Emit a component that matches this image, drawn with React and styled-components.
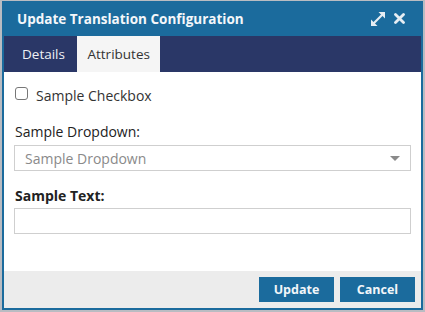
import React from "react";
import styled, { createGlobalStyle } from "styled-components";

const Global = createGlobalStyle`
  html, body { margin: 0; padding: 0; }
  body {
    background: #b9bcc2;
    font-family: "Open Sans", "Liberation Sans", sans-serif;
    width: 425px;
    height: 312px;
    overflow: hidden;
  }
  #root { padding: 1px 2px 0 2px; }
`;

const BLUE = "#1b6b9d";

const Dialog = styled.div`
  width: 421px;
  box-sizing: border-box;
  border: 2px solid ${BLUE};
  border-top: none;
  background: #fff;
  display: flex;
  flex-direction: column;
`;

const TitleBar = styled.div`
  height: 35px;
  background: ${BLUE};
  display: flex;
  align-items: center;
  padding: 0 18px 0 15px;
  margin: 0 -2px;
  box-sizing: border-box;
`;

const Title = styled.div`
  flex: 1;
  color: #f4f7fa;
  font-size: 13.5px;
  font-weight: 700;
`;

const IconBtn = styled.span`
  display: inline-flex;
  width: ${(p) => p.$w}px;
  height: 16px;
  align-items: center;
  justify-content: center;
  margin-left: ${(p) => p.$ml || 0}px;
`;

const TabBar = styled.div`
  height: 36px;
  background: #2a3767;
  display: flex;
`;

const Tab = styled.div`
  display: flex;
  align-items: center;
  padding-left: ${(p) => (p.$active ? "10px" : "18px")};
  padding-right: ${(p) => (p.$active ? "10.5px" : "12.5px")};
  background: ${(p) => (p.$active ? "#f5f5f5" : "transparent")};
  color: ${(p) => (p.$active ? "#333" : "#eef0f5")};
  font-size: 13.5px;
`;

const Body = styled.div`
  height: 199px;
  box-sizing: border-box;
  padding: 13px 10px 0 10px;
  display: flex;
  flex-direction: column;
`;

const CheckRow = styled.label`
  display: flex;
  align-items: center;
  height: 20px;
  margin-bottom: 17px;
  font-size: 14px;
  color: #333;
  padding-left: 1px;
`;

const Box = styled.span`
  width: 11px;
  height: 11px;
  border: 1px solid #777;
  border-radius: 3px;
  background: #fff;
  margin-right: 8px;
  margin-top: -3px;
`;

const Group = styled.div`
  display: flex;
  flex-direction: column;
  margin-bottom: 15px;
`;

const Label = styled.div`
  font-size: 14px;
  line-height: 20px;
  color: #222;
  font-weight: ${(p) => (p.$bold ? 700 : 400)};
  padding-left: 1px;
  margin-bottom: ${(p) => p.$mb}px;
`;

const Select = styled.div`
  height: 26px;
  box-sizing: border-box;
  border: 1px solid #cfcfcf;
  display: flex;
  align-items: center;
  padding: 0 10px;
  color: #8a8a8a;
  font-size: 14px;
`;

const SelectText = styled.span`
  flex: 1;
`;

const Caret = styled.span`
  width: 0;
  height: 0;
  border-left: 5px solid transparent;
  border-right: 5px solid transparent;
  border-top: 5px solid #8a8a8a;
`;

const Input = styled.div`
  height: 26px;
  box-sizing: border-box;
  border: 1px solid #cfcfcf;
`;

const Footer = styled.div`
  height: 37px;
  background: #ececec;
  display: flex;
  justify-content: flex-end;
  align-items: flex-start;
  padding: 6px 6px 0 0;
  box-sizing: border-box;
  gap: 6px;
`;

const Button = styled.button`
  width: 75px;
  height: 25px;
  border: none;
  background: ${BLUE};
  color: #f2f6f9;
  font-family: "Open Sans", "Liberation Sans", sans-serif;
  font-size: 12.5px;
  font-weight: 700;
  padding: 0;
`;

export default function App() {
  return (
    <>
      <Global />
      <Dialog>
        <TitleBar>
          <Title>Update Translation Configuration</Title>
          <IconBtn $w={16}>
            <svg width="16" height="16" viewBox="0 0 16 16">
              <line x1="3.5" y1="12.5" x2="12.5" y2="3.5" stroke="#e6edf3" strokeWidth="2.2" />
              <polygon points="15,1 15,7.5 8.5,1" fill="#e6edf3" />
              <polygon points="1,15 1,8.5 7.5,15" fill="#e6edf3" />
            </svg>
          </IconBtn>
          <IconBtn $w={11} $ml={8}>
            <svg width="11" height="11" viewBox="0 0 11 11">
              <path d="M1.5 1.5 L9.5 9.5 M9.5 1.5 L1.5 9.5" stroke="#e6edf3" strokeWidth="2.8" strokeLinecap="round" />
            </svg>
          </IconBtn>
        </TitleBar>
        <TabBar>
          <Tab>Details</Tab>
          <Tab $active>Attributes</Tab>
        </TabBar>
        <Body>
          <CheckRow>
            <Box />
            Sample Checkbox
          </CheckRow>
          <Group>
            <Label $mb={3}>Sample Dropdown:</Label>
            <Select>
              <SelectText>Sample Dropdown</SelectText>
              <Caret />
            </Select>
          </Group>
          <Group>
            <Label $bold $mb={2}>Sample Text:</Label>
            <Input />
          </Group>
        </Body>
        <Footer>
          <Button>Update</Button>
          <Button>Cancel</Button>
        </Footer>
      </Dialog>
    </>
  );
}
